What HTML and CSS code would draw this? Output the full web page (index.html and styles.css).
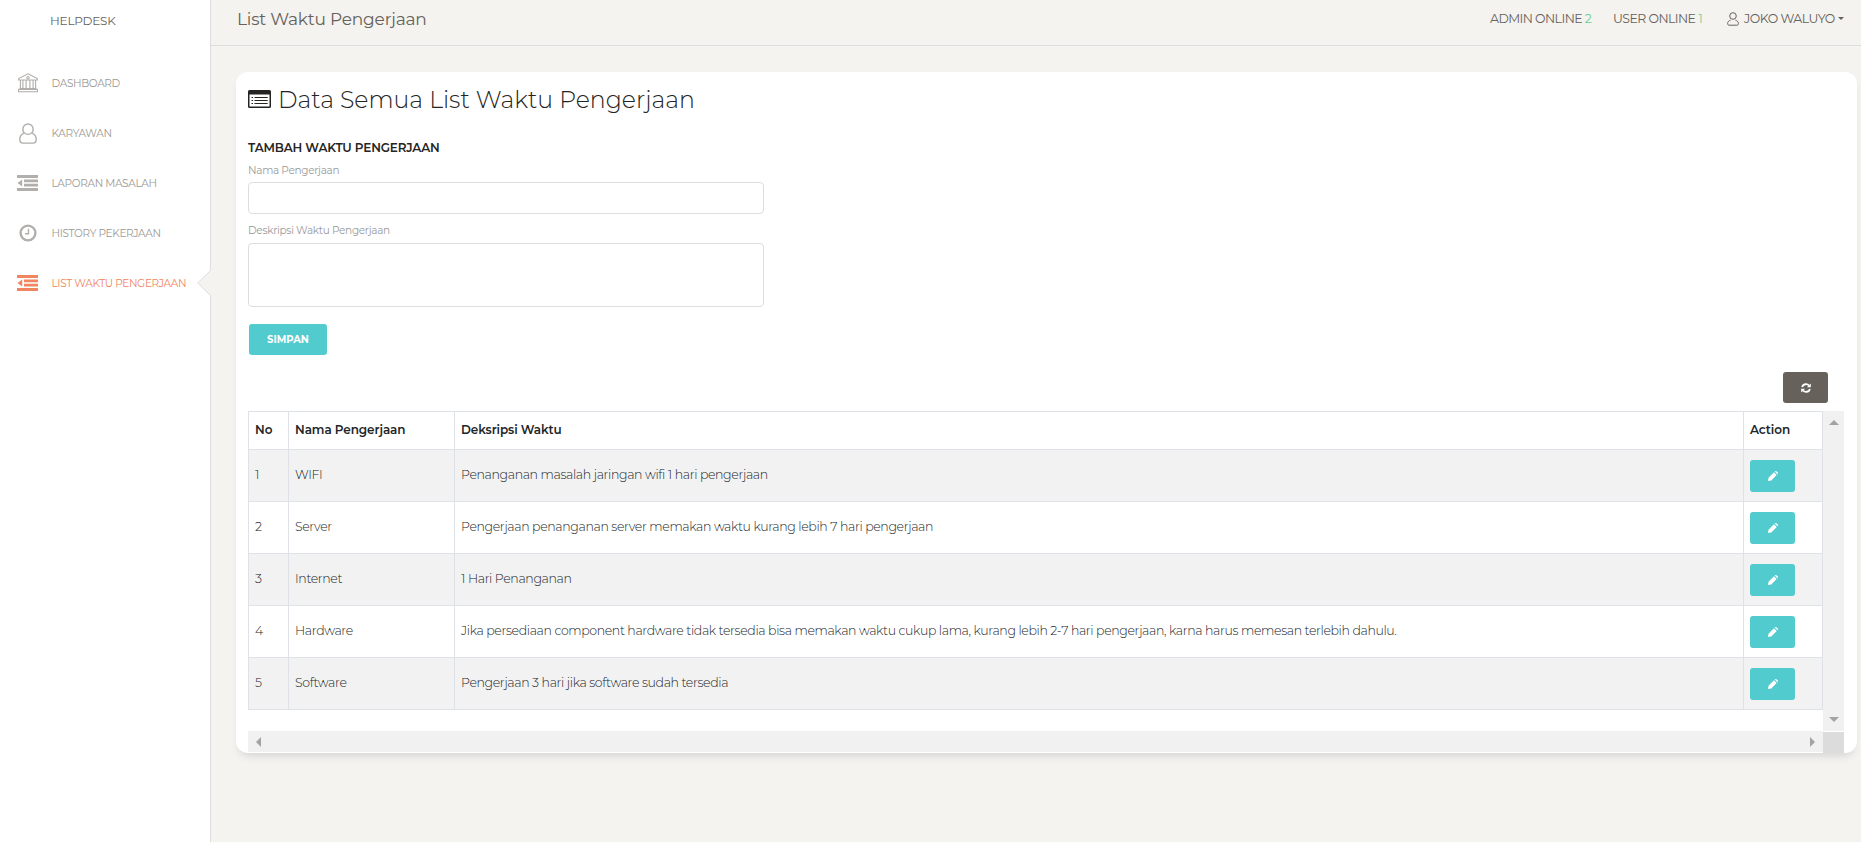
FILE: index.html
```html
<!DOCTYPE html>
<html lang="id">
<head>
<meta charset="utf-8">
<title>List Waktu Pengerjaan</title>
<link rel="stylesheet" href="styles.css">
</head>
<body>
<svg class="defs" width="0" height="0">
  <symbol id="outdent" viewBox="0 0 21 16"><path fill="currentColor" d="M0 0h21v3H0zM7 4.600H21v2.600H7zM7 8.800H21v2.600H7zM0 13h21v3H0zM5.200 4.400v7.200L.5 8z"/></symbol>
  <symbol id="pencil" viewBox="0 0 10 10"><path fill="#fff" d="M5.900 1.300 8.700 4.100 3.300 9.500 0 10 .5 6.700zM6.700.6l.3-.3c.4-.4 1-.4 1.400 0l1.300 1.300c.4.4.4 1 0 1.400l-.3.300z"/></symbol>
</svg>
<div class="app">
  <aside class="sidebar">
    <div class="brand">HELPDESK</div>
    <nav class="menu">
      <a class="item">
        <svg class="icon" width="20" height="20" viewBox="0 0 20 20" fill="none" stroke="currentColor" stroke-width="1.1"><path d="M10 .8 19.3 5.600V7H.7V5.600zM2.400 7v8.500M4.900 7v8.500M8.100 7v8.500M11.900 7v8.500M15.100 7v8.500M17.600 7v8.500M1.600 15.600h16.800M.6 18.800V16.400h18.800v2.400z"/><circle cx="10" cy="4.700" r="1.200"/></svg>
        <span>DASHBOARD</span>
      </a>
      <a class="item">
        <svg class="icon" width="18" height="21" viewBox="0 0 18 21" fill="none" stroke="currentColor" stroke-width="1.400"><path d="M5.300 10.200C2.500 11 .8 13.200.8 16.600c0 2.200 1 3.500 3.200 3.500h10c2.200 0 3.200-1.300 3.200-3.500 0-3.400-1.700-5.600-4.500-6.400"/><circle cx="9" cy="6.200" r="5.200"/></svg>
        <span>KARYAWAN</span>
      </a>
      <a class="item">
        <svg class="icon" width="21" height="16"><use href="#outdent"/></svg>
        <span>LAPORAN MASALAH</span>
      </a>
      <a class="item">
        <svg class="icon" width="18" height="18" viewBox="0 0 18 18" fill="none" stroke="currentColor"><circle cx="9" cy="9" r="7.400" stroke-width="2.400"/><path d="M9.500 4.800v4.900H6" stroke-width="1.400"/></svg>
        <span>HISTORY PEKERJAAN</span>
      </a>
      <a class="item active">
        <svg class="icon" width="21" height="16"><use href="#outdent"/></svg>
        <span>LIST WAKTU PENGERJAAN</span>
        <svg class="pointer" width="14" height="26" viewBox="0 0 14 26"><path d="M14 0 .7 13 14 26z" fill="#f4f3ef"/><path d="M13.500.500.700 13l12.800 12.500" fill="none" stroke="#ddd"/></svg>
      </a>
    </nav>
  </aside>
  <div class="main">
    <header class="topbar">
      <div class="page-title">List Waktu Pengerjaan</div>
      <div class="status">
        <span class="admin">ADMIN ONLINE <b>2</b></span>
        <span class="user">USER ONLINE <b>1</b></span>
        <span class="account">
          <svg width="12" height="14" viewBox="0 0 12 14" fill="none" stroke="currentColor"><circle cx="6" cy="4" r="3.300"/><path d="M3.600 8.200C1.600 8.700.600 10 .600 11.600c0 1 .500 1.600 1.600 1.600h7.600c1.100 0 1.600-.600 1.600-1.600 0-1.600-1-2.900-3-3.400"/></svg>
          <span>JOKO WALUYO</span>
          <i class="caret"></i>
        </span>
      </div>
    </header>
    <section class="card">
      <h1 class="title">
        <svg width="23" height="18" viewBox="0 0 23 18"><path fill="#252422" fill-rule="evenodd" d="M1.500 0h20A1.500 1.500 0 0 1 23 1.500v15a1.500 1.500 0 0 1-1.500 1.500h-20A1.500 1.500 0 0 1 0 16.500v-15A1.500 1.500 0 0 1 1.500 0zM1.500 4.500V16.500h20V4.500z"/><path stroke="#252422" d="M3.500 7.500H5m1.500 0h13.200M3.500 10.500H5m1.500 0h13.200M3.500 13.500H5m1.500 0h13.200"/></svg>
        <span>Data Semua List Waktu Pengerjaan</span>
      </h1>
      <form class="form">
        <h2 class="subtitle">TAMBAH WAKTU PENGERJAAN</h2>
        <label class="label" for="nama">Nama Pengerjaan</label>
        <input class="field" id="nama" type="text">
        <label class="label second" for="desk">Deskripsi Waktu Pengerjaan</label>
        <textarea class="field area" id="desk"></textarea>
        <button class="btn save" type="button">SIMPAN</button>
      </form>
      <div class="tools">
        <button class="btn refresh" type="button" aria-label="Refresh">
          <svg width="10" height="10" viewBox="0 0 10 10" fill="none" stroke="#fff" stroke-width="1.900"><path d="M1.100 4.100A4 4 0 0 1 8 2.500M8.900 5.900A4 4 0 0 1 2 7.500"/><path fill="#fff" stroke="none" d="M9.800.400v3.900H5.900zM.200 9.600V5.700h3.900z"/></svg>
        </button>
      </div>
      <div class="scroller">
        <div class="viewport">
          <table class="table">
            <colgroup><col class="c-no"><col class="c-name"><col><col class="c-act"></colgroup>
            <thead><tr><th>No</th><th>Nama Pengerjaan</th><th>Deksripsi Waktu</th><th>Action</th></tr></thead>
            <tbody>
              <tr><td>1</td><td>WIFI</td><td>Penanganan masalah jaringan wifi 1 hari pengerjaan</td><td><button class="btn edit" type="button" aria-label="Edit"><svg width="10" height="10"><use href="#pencil"/></svg></button></td></tr>
              <tr><td>2</td><td>Server</td><td>Pengerjaan penanganan server memakan waktu kurang lebih 7 hari pengerjaan</td><td><button class="btn edit" type="button" aria-label="Edit"><svg width="10" height="10"><use href="#pencil"/></svg></button></td></tr>
              <tr><td>3</td><td>Internet</td><td>1 Hari Penanganan</td><td><button class="btn edit" type="button" aria-label="Edit"><svg width="10" height="10"><use href="#pencil"/></svg></button></td></tr>
              <tr><td>4</td><td>Hardware</td><td>Jika persediaan component hardware tidak tersedia bisa memakan waktu cukup lama, kurang lebih 2-7 hari pengerjaan, karna harus memesan terlebih dahulu.</td><td><button class="btn edit" type="button" aria-label="Edit"><svg width="10" height="10"><use href="#pencil"/></svg></button></td></tr>
              <tr><td>5</td><td>Software</td><td>Pengerjaan 3 hari jika software sudah tersedia</td><td><button class="btn edit" type="button" aria-label="Edit"><svg width="10" height="10"><use href="#pencil"/></svg></button></td></tr>
            </tbody>
          </table>
        </div>
        <div class="vbar"><i class="arrow up"></i><i class="arrow down"></i></div>
        <div class="hbar"><i class="arrow left"></i><i class="arrow right"></i></div>
        <div class="corner"></div>
      </div>
    </section>
  </div>
</div>
</body>
</html>
```

FILE: styles.css
```css
* { box-sizing: border-box; }
body {
  margin: 0;
  font-family: Montserrat, Inter, sans-serif;
  font-size: 12px;
  font-weight: 400;
  color: #212529;
  background: #f4f3ef;
  overflow: hidden;
}
.defs { display: block; position: absolute; }
svg { display: block; }
h1, h2 { margin: 0; }
.app { display: grid; grid-template-columns: 211px 1fr; height: 842px; }

/* Sidebar */
.sidebar { background: #fff; border-right: 1px solid #ddd; }
.brand {
  height: 58px;
  padding: 10px 0 0 50px;
  line-height: 21px;
  letter-spacing: -.2px;
  color: #66615b;
}
.item {
  position: relative;
  display: grid;
  grid-template-columns: 21px auto;
  column-gap: 13.5px;
  align-items: center;
  height: 50px;
  padding-left: 17px;
  line-height: 20px;
  font-size: 10.5px;
  letter-spacing: -.34px;
  color: #9b9894;
  white-space: nowrap;
}
.item span { padding-top: 1px; }
.item .icon { justify-self: center; color: #b1aeab; }
.item.active, .item.active .icon { color: #f0855f; }
.pointer { position: absolute; right: -1px; top: 12px; }

/* Top bar */
.main { min-width: 0; }
.topbar {
  display: flex;
  justify-content: space-between;
  height: 46px;
  padding: 8px 17px 0 26px;
  border-bottom: 1px solid #ddd;
  color: #66615b;
}
.page-title { font-size: 17px; line-height: 22px; letter-spacing: -.2px; }
.status { display: flex; line-height: 21px; white-space: nowrap; font-size: 12.5px; letter-spacing: -.56px; }
.status b { font-weight: 400; color: #6bd098; }
.admin { flex: none; width: 123px; }
.user { flex: none; width: 114px; }
.account { display: flex; flex: none; align-items: center; width: 117px; height: 22px; }
.account span { margin: 0 0 1px 5px; line-height: 21px; letter-spacing: -.5px; }
.caret {
  margin: 0 0 2px 3px;
  border: 3.5px solid transparent;
  border-top-color: #66615b;
  border-bottom: 0;
}

/* Card */
.card {
  height: 681px;
  margin: 26px 4px 0 25px;
  padding: 10px 13px 0 12px;
  background: #fff;
  border-radius: 12px;
  box-shadow: 0 6px 10px -4px rgba(0, 0, 0, .15);
}
.title {
  display: flex;
  align-items: center;
  gap: 7px;
  height: 34px;
  font-size: 23.6px;
  font-weight: 300;
  color: #252422;
}
.form { width: 516px; }
.subtitle {
  margin-top: 22px;
  font-size: 12px;
  font-weight: 600;
  line-height: 20px;
  letter-spacing: -.16px;
  color: #252422;
}
.label { display: block; margin: 4px 0 2px; line-height: 18px; font-size: 10.5px; letter-spacing: -.3px; color: #9a9a9a; }
.label.second { margin: 8px 0 3px; }
.field {
  display: block;
  width: 516px;
  height: 32px;
  margin: 0;
  border: 1px solid #ddd;
  border-radius: 4px;
  background: #fff;
  resize: none;
  outline: 0;
}
.area { height: 64px; }
.btn {
  display: flex;
  align-items: center;
  justify-content: center;
  padding: 0;
  border: 0;
  border-radius: 3px;
  background: #51cbce;
  color: #fff;
  font: 700 10px/18px Montserrat, Inter, sans-serif;
}
.save { width: 78px; height: 31px; margin: 17px 0 0 1px; }
.tools { display: flex; justify-content: flex-end; margin: 17px 16px 8px 0; }
.refresh { width: 45px; height: 31px; background: #66615b; }
.edit { width: 45px; height: 32px; }

/* Scrollable table */
.scroller { display: grid; grid-template: 320px 22px / 1575px 21px; }
.table {
  width: 1575px;
  table-layout: fixed;
  border-collapse: collapse;
}
.c-no { width: 40px; }
.c-name { width: 166px; }
.c-act { width: 79px; }
.table th, .table td {
  height: 52px;
  padding: 0 6px;
  border: 1px solid #dee2e6;
  text-align: left;
  line-height: 20px;
  white-space: nowrap;
}
.table th { height: 38px; padding-bottom: 2px; font-weight: 600; letter-spacing: -.08px; }
.table td { padding-bottom: 2px; font-size: 12.5px; font-weight: 350; letter-spacing: -.36px; }
.table td:last-child { padding: 0 6px; }
.table tbody tr:nth-child(odd) { background: #f2f2f2; }
.vbar, .hbar { display: flex; align-items: center; justify-content: space-between; background: #f1f1f1; }
.vbar { flex-direction: column; padding: 9px 0; }
.hbar { height: 21px; padding: 0 8px; }
.corner { margin-top: 1px; background: #dcdcdc; }
.arrow { border: 5px solid transparent; }
.up { border-bottom-color: #a3a3a3; border-top: 0; }
.down { border-top-color: #a3a3a3; border-bottom: 0; }
.left { border-right-color: #a3a3a3; border-left: 0; }
.right { border-left-color: #a3a3a3; border-right: 0; }
```
